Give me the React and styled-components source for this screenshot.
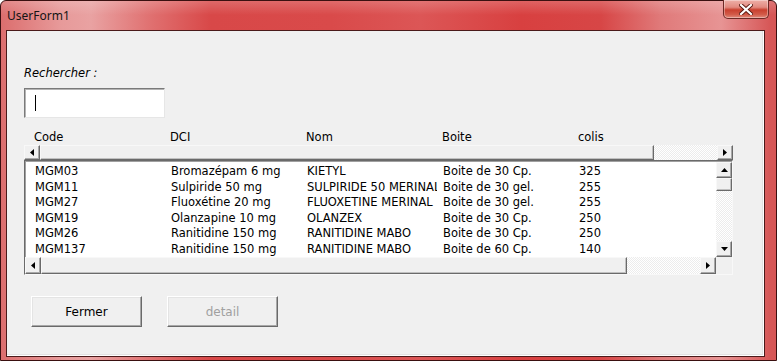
import React from 'react'
import styled, { createGlobalStyle } from 'styled-components'

const Global = createGlobalStyle`
  html, body { margin: 0; padding: 0; }
  body { width: 777px; height: 361px; overflow: hidden; background: #fff; }
`

const rows = [
  ['MGM03', 'Bromazépam 6 mg', 'KIETYL', 'Boite de 30 Cp.', '325'],
  ['MGM11', 'Sulpiride 50 mg', 'SULPIRIDE 50 MERINAL', 'Boite de 30 gel.', '255'],
  ['MGM27', 'Fluoxétine 20 mg', 'FLUOXETINE MERINAL', 'Boite de 30 gel.', '255'],
  ['MGM19', 'Olanzapine 10 mg', 'OLANZEX', 'Boite de 30 Cp.', '250'],
  ['MGM26', 'Ranitidine 150 mg', 'RANITIDINE MABO', 'Boite de 30 Cp.', '250'],
  ['MGM137', 'Ranitidine 150 mg', 'RANITIDINE MABO', 'Boite de 60 Cp.', '140'],
]

const heads = ['Code', 'DCI', 'Nom', 'Boite', 'colis']

const Window = styled.div`
  width: 777px;
  height: 361px;
  box-sizing: border-box;
  display: flex;
  flex-direction: column;
  border: 1px solid #3a1010;
  border-radius: 6px 6px 0 0;
  background:
    linear-gradient(180deg, rgba(255,255,255,0.18) 0px, rgba(255,255,255,0) 14px),
    linear-gradient(90deg, #dc6e6e 0px, #e79a9a 60px, #e9a2a2 90px, #e07070 150px, #d84848 210px, #d94a4a 330px, #dc5656 420px, #d84040 520px, #d74646 600px, #e07a7a 660px, #e79494 720px, #d65656 770px);
  padding: 0 11px 3px 5px;
`

const TitleBar = styled.div`
  height: 29px;
  display: flex;
  align-items: flex-start;
  justify-content: space-between;
  flex-shrink: 0;
`

const Title = styled.div`
  font-family: "Noto Sans", "Open Sans", sans-serif;
  font-size: 12px;
  color: #141414;
  padding: 6px 0 0 1px;
`

const Close = styled.div`
  width: 46px;
  height: 19px;
  margin-top: -1px;
  margin-right: -4px;
  box-sizing: border-box;
  border: 1px solid #6e2a26;
  border-top: none;
  border-radius: 0 0 5px 5px;
  background: linear-gradient(180deg, #eeb0a8 0%, #e28a80 40%, #c9402f 55%, #d25a48 80%, #e08a7c 100%);
  box-shadow: inset 0 0 0 1px rgba(255,255,255,0.35);
  display: flex;
  align-items: center;
  justify-content: center;
`

const Client = styled.div`
  flex: 1;
  background: #f0f0f0;
  border: 1px solid #4a1a1a;
  box-shadow: inset -1px -1px 0 #ffffff, inset -2px -2px 0 #e2e2e2;
  padding: 35px 0 0 17px;
  display: flex;
  flex-direction: column;
  align-items: flex-start;
  font-family: "DejaVu Sans", Verdana, sans-serif;
  font-size: 11.5px;
  color: #000;
`

const Label = styled.div`
  font-style: italic;
  line-height: 14px;
  height: 14px;
`

const TextBox = styled.div`
  margin-top: 8px;
  width: 141px;
  height: 30px;
  box-sizing: border-box;
  background: #fff;
  border: 1px solid;
  border-color: #7a7a7a #e6e6e6 #e6e6e6 #7a7a7a;
  box-shadow: inset 1px 1px 0 #b4b4b4;
  padding: 6px 0 0 10px;
`

const Caret = styled.div`
  width: 1px;
  height: 16px;
  background: #000;
`

const Grid = styled.div`
  width: 709px;
  display: flex;
  flex-direction: column;
`

const HeadRow = styled.div`
  margin-top: 12px;
  height: 14px;
  line-height: 14px;
  display: flex;
  padding-left: 10px;
  margin-bottom: 1px;
`

const Cell = styled.div`
  width: 130px;
  margin-right: 6px;
  flex-shrink: 0;
  white-space: nowrap;
  overflow: hidden;
`

const HScroll = styled.div`
  height: ${p => p.h || 15}px;
  display: flex;
  flex-shrink: 0;
`

const Arrow = styled.div`
  width: 16px;
  flex-shrink: 0;
  box-sizing: border-box;
  background: #f0f0f0;
  border: 1px solid;
  border-color: #f8f8f8 #6a6a6a #6a6a6a #f8f8f8;
  box-shadow: inset -1px -1px 0 #a8a8a8;
  display: flex;
  align-items: center;
  justify-content: center;
  ${p => p.vert ? 'height: 16px;' : ''}
`

const Thumb = styled.div`
  flex-shrink: 0;
  box-sizing: border-box;
  background: #f0f0f0;
  border: 1px solid;
  border-color: #f8f8f8 #6a6a6a #6a6a6a #f8f8f8;
  box-shadow: inset -1px -1px 0 #c0c0c0;
  ${p => p.w ? `width: ${p.w}px;` : ''}
  ${p => p.h ? `height: ${p.h}px;` : ''}
`

const Track = styled.div`
  flex: 1;
  background-color: #f6f6f6;
  background-image: repeating-conic-gradient(#ffffff 0 25%, #ececec 0 50%);
  background-size: 2px 2px;
`

const ListBox = styled.div`
  width: 709px;
  height: 115px;
  box-sizing: border-box;
  border: 1px solid;
  border-color: #6a6a6a #f8f8f8 #f8f8f8 #6a6a6a;
  box-shadow: inset 1px 1px 0 #a0a0a0;
  background: #fff;
  display: grid;
  grid-template-columns: 1fr 16px;
  grid-template-rows: 1fr 17px;
`

const Rows = styled.div`
  padding: 3px 0 0 10px;
  overflow: hidden;
`

const Row = styled.div`
  display: flex;
  height: 15.6px;
  line-height: 15.6px;
`

const VScroll = styled.div`
  display: flex;
  flex-direction: column;
  padding-top: 1px;
`

const Corner = styled.div`
  background: #f0f0f0;
`

const Buttons = styled.div`
  margin-top: 21px;
  margin-left: 7px;
  display: flex;
  gap: 25px;
`

const Button = styled.div`
  width: 111px;
  height: 31px;
  box-sizing: border-box;
  background: #f0f0f0;
  border: 1px solid;
  border-color: #ffffff #6a6a6a #6a6a6a #ffffff;
  box-shadow: inset -1px -1px 0 #a8a8a8, inset 1px 1px 0 #e4e4e4;
  display: flex;
  align-items: center;
  justify-content: center;
  font-size: 12px;
  color: ${p => p.disabled ? '#a0a0a0' : '#000'};
`

const Tri = ({ dir }) => {
  const pts = {
    left: '4,0 0,3.5 4,7',
    right: '0,0 4,3.5 0,7',
    up: '0,4 3.5,0 7,4',
    down: '0,0 3.5,4 7,0',
  }[dir]
  const horiz = dir === 'left' || dir === 'right'
  return (
    <svg width={horiz ? 4 : 7} height={horiz ? 7 : 4} viewBox={horiz ? '0 0 4 7' : '0 0 7 4'}>
      <polygon points={pts} fill="#000" />
    </svg>
  )
}

export default function App() {
  return (
    <>
      <Global />
      <Window>
        <TitleBar>
          <Title>UserForm1</Title>
          <Close>
            <svg width="14" height="11" viewBox="0 0 14 11">
              <path d="M2 1 L12 10 M12 1 L2 10" stroke="#5a1810" strokeWidth="4" strokeLinecap="square" />
              <path d="M2 1 L12 10 M12 1 L2 10" stroke="#ffffff" strokeWidth="2.2" strokeLinecap="square" />
            </svg>
          </Close>
        </TitleBar>
        <Client>
          <Label>Rechercher :</Label>
          <TextBox><Caret /></TextBox>
          <Grid>
            <HeadRow>
              {heads.map(h => <Cell key={h}>{h}</Cell>)}
            </HeadRow>
            <HScroll>
              <Arrow><Tri dir="left" /></Arrow>
              <Thumb w={614} />
              <Track />
              <Arrow><Tri dir="right" /></Arrow>
            </HScroll>
            <ListBox>
              <Rows>
                {rows.map(r => (
                  <Row key={r[0]}>
                    {r.map((c, i) => <Cell key={i}>{c}</Cell>)}
                  </Row>
                ))}
              </Rows>
              <VScroll>
                <Arrow vert><Tri dir="up" /></Arrow>
                <Thumb h={13} />
                <Track />
                <Arrow vert><Tri dir="down" /></Arrow>
              </VScroll>
              <HScroll h={17}>
                <Arrow><Tri dir="left" /></Arrow>
                <Thumb w={586} />
                <Track />
                <Arrow><Tri dir="right" /></Arrow>
              </HScroll>
              <Corner />
            </ListBox>
          </Grid>
          <Buttons>
            <Button>Fermer</Button>
            <Button disabled>detail</Button>
          </Buttons>
        </Client>
      </Window>
    </>
  )
}
